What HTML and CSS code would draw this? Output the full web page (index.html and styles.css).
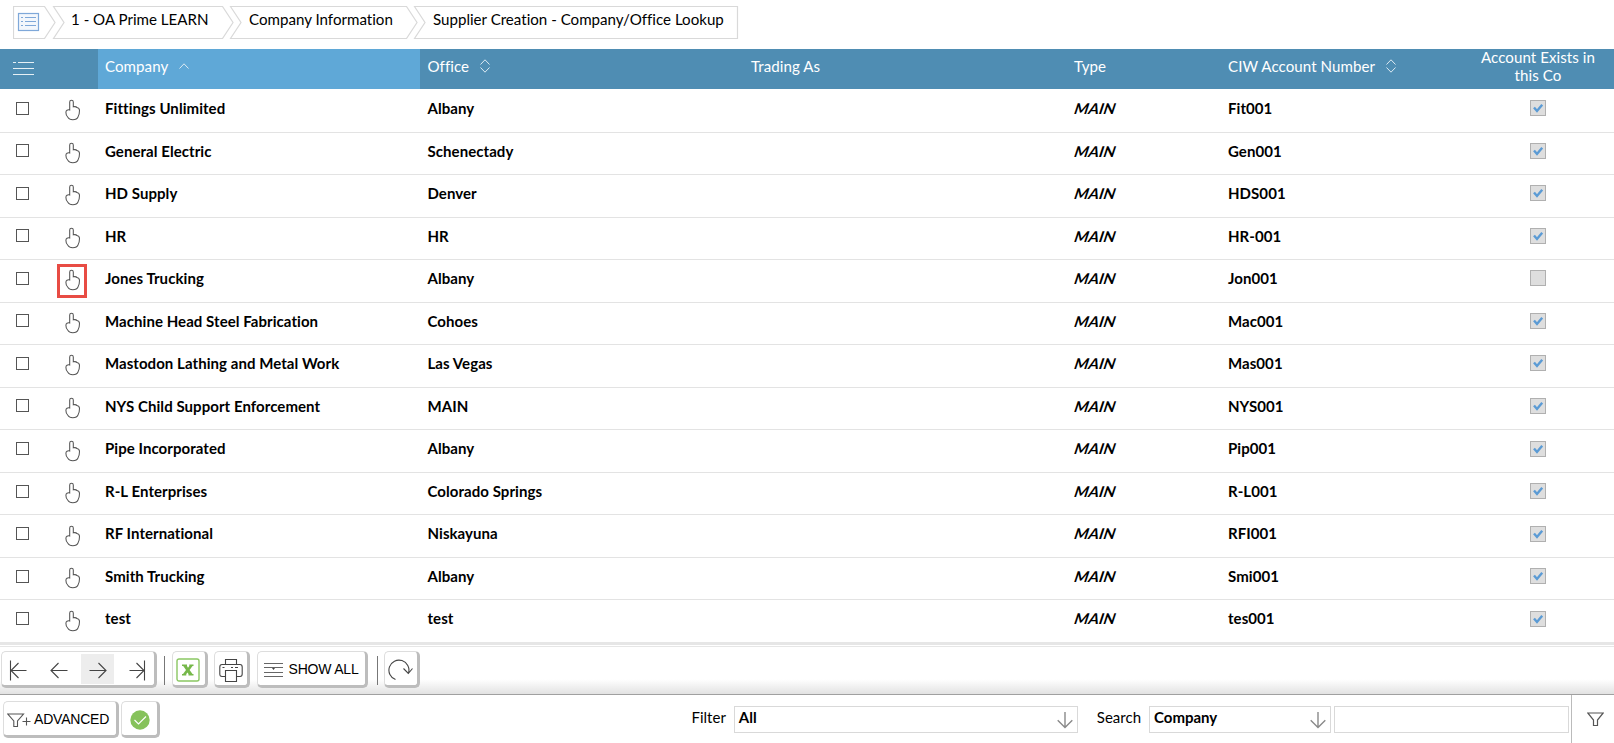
FILE: index.html
```html
<!DOCTYPE html>
<html lang="en">
<head>
<meta charset="utf-8">
<title>Supplier Creation - Company/Office Lookup</title>
<link rel="stylesheet" href="styles.css">
</head>
<body>
<svg class="sprites" width="0" height="0">
  <symbol id="hand" viewBox="0 0 16 22"><path d="M4.700 11V3.100a1.800 1.800 0 0 1 3.600 0V7.800C10 7.400 11.400 7.700 12 8.600C13.800 9 14.500 10 14.500 11.500C14.500 14 14.300 16 13 18C12.300 20 10.500 20.700 7.800 20.700C5 20.700 3.800 20 3 18.500C1.500 17 .8 15 .9 13.200C1 11.300 2.500 10.500 4.700 11z" fill="none" stroke="#555" stroke-width="1.050"/></symbol>
  <symbol id="sort" viewBox="0 0 10 14"><path d="M.5 5.500L5 .8l4.500 4.700M.5 8.500L5 13.200l4.500-4.700" fill="none" stroke="#dceaf2" stroke-width="1"/></symbol>
  <symbol id="tick" viewBox="0 0 16 16"><path d="M4 7.500L7 11L12.200 4.800" fill="none" stroke="#5b9bd5" stroke-width="2.400"/></symbol>
  <symbol id="down" viewBox="0 0 16 18"><path d="M8 1V16.500M.7 9.200L8 16.500L15.300 9.200" fill="none" stroke="#8a8a8a" stroke-width="1.400"/></symbol>
</svg>

<nav class="crumbs">
  <svg class="crumb-shapes" width="726" height="33" viewBox="0 0 726 33" fill="none" stroke="#d9d9d9" stroke-width="1.200">
    <path d="M.5.5H31.500L42 16.500L31.500 32.500H.5z"/>
    <path d="M40.500.5H209.500L220 16.500L209.500 32.500H40.500L51 16.500z"/>
    <path d="M217.500.5H393.500L404 16.500L393.500 32.500H217.500L228 16.500z"/>
    <path d="M401.500.5H724.500V32.500H401.500L412 16.500z"/>
    <g stroke="#7fa8d9"><rect x="5.500" y="7.500" width="20" height="17" fill="#f3f7fc"/><path d="M8 11.500h2M12 11.500h11M8 15.500h2M12 15.500h11M8 19.500h2M12 19.500h11" stroke-width="1"/></g>
  </svg>
  <span class="crumb c1">1 - OA Prime LEARN</span>
  <span class="crumb c2">Company Information</span>
  <span class="crumb c3">Supplier Creation - Company/Office Lookup</span>
</nav>

<main class="grid">
  <div class="row head">
    <span class="sel"><svg width="21" height="16" viewBox="0 0 21 16"><path d="M0 1.500h3M5 1.500h16M0 7.500h21M0 13.500h21" stroke="#e6f0f5" fill="none"/></svg></span>
    <span></span>
    <span class="sorted">Company<svg class="caret" width="10" height="6" viewBox="0 0 10 6"><path d="M.5 5.500L5 .8l4.500 4.700" fill="none" stroke="#dceaf2"/></svg></span>
    <span>Office<svg class="caret" width="10" height="14"><use href="#sort"/></svg></span>
    <span>Trading As</span>
    <span>Type</span>
    <span>CIW Account Number<svg class="caret" width="10" height="14"><use href="#sort"/></svg></span>
    <span class="exists">Account Exists in this Co</span>
  </div>
  <div class="row"><i class="box"></i><span class="pick"><svg width="16" height="22"><use href="#hand"/></svg></span><span>Fittings Unlimited</span><span>Albany</span><span></span><span class="type">MAIN</span><span>Fit001</span><i class="flag"><svg width="16" height="16"><use href="#tick"/></svg></i></div>
  <div class="row"><i class="box"></i><span class="pick"><svg width="16" height="22"><use href="#hand"/></svg></span><span>General Electric</span><span>Schenectady</span><span></span><span class="type">MAIN</span><span>Gen001</span><i class="flag"><svg width="16" height="16"><use href="#tick"/></svg></i></div>
  <div class="row"><i class="box"></i><span class="pick"><svg width="16" height="22"><use href="#hand"/></svg></span><span>HD Supply</span><span>Denver</span><span></span><span class="type">MAIN</span><span>HDS001</span><i class="flag"><svg width="16" height="16"><use href="#tick"/></svg></i></div>
  <div class="row"><i class="box"></i><span class="pick"><svg width="16" height="22"><use href="#hand"/></svg></span><span>HR</span><span>HR</span><span></span><span class="type">MAIN</span><span>HR-001</span><i class="flag"><svg width="16" height="16"><use href="#tick"/></svg></i></div>
  <div class="row"><i class="box"></i><span class="pick marked"><svg width="16" height="22"><use href="#hand"/></svg></span><span>Jones Trucking</span><span>Albany</span><span></span><span class="type">MAIN</span><span>Jon001</span><i class="flag"></i></div>
  <div class="row"><i class="box"></i><span class="pick"><svg width="16" height="22"><use href="#hand"/></svg></span><span>Machine Head Steel Fabrication</span><span>Cohoes</span><span></span><span class="type">MAIN</span><span>Mac001</span><i class="flag"><svg width="16" height="16"><use href="#tick"/></svg></i></div>
  <div class="row"><i class="box"></i><span class="pick"><svg width="16" height="22"><use href="#hand"/></svg></span><span>Mastodon Lathing and Metal Work</span><span>Las Vegas</span><span></span><span class="type">MAIN</span><span>Mas001</span><i class="flag"><svg width="16" height="16"><use href="#tick"/></svg></i></div>
  <div class="row"><i class="box"></i><span class="pick"><svg width="16" height="22"><use href="#hand"/></svg></span><span>NYS Child Support Enforcement</span><span>MAIN</span><span></span><span class="type">MAIN</span><span>NYS001</span><i class="flag"><svg width="16" height="16"><use href="#tick"/></svg></i></div>
  <div class="row"><i class="box"></i><span class="pick"><svg width="16" height="22"><use href="#hand"/></svg></span><span>Pipe Incorporated</span><span>Albany</span><span></span><span class="type">MAIN</span><span>Pip001</span><i class="flag"><svg width="16" height="16"><use href="#tick"/></svg></i></div>
  <div class="row"><i class="box"></i><span class="pick"><svg width="16" height="22"><use href="#hand"/></svg></span><span>R-L Enterprises</span><span>Colorado Springs</span><span></span><span class="type">MAIN</span><span>R-L001</span><i class="flag"><svg width="16" height="16"><use href="#tick"/></svg></i></div>
  <div class="row"><i class="box"></i><span class="pick"><svg width="16" height="22"><use href="#hand"/></svg></span><span>RF International</span><span>Niskayuna</span><span></span><span class="type">MAIN</span><span>RFI001</span><i class="flag"><svg width="16" height="16"><use href="#tick"/></svg></i></div>
  <div class="row"><i class="box"></i><span class="pick"><svg width="16" height="22"><use href="#hand"/></svg></span><span>Smith Trucking</span><span>Albany</span><span></span><span class="type">MAIN</span><span>Smi001</span><i class="flag"><svg width="16" height="16"><use href="#tick"/></svg></i></div>
  <div class="row"><i class="box"></i><span class="pick"><svg width="16" height="22"><use href="#hand"/></svg></span><span>test</span><span>test</span><span></span><span class="type">MAIN</span><span>tes001</span><i class="flag"><svg width="16" height="16"><use href="#tick"/></svg></i></div>
</main>

<section class="tools">
  <div class="btn pager">
    <svg width="152" height="32" viewBox="0 0 152 32" fill="none" stroke="#444" stroke-width="1.100">
      <rect x="79" y="1" width="33" height="30" fill="#ededed" stroke="none"/>
      <path d="M8.500 7.500V27.500M24.500 17.500H9M16.500 10L9 17.500L16.500 25"/>
      <path d="M65.500 17.500H49M56.500 10L49 17.500L56.500 25"/>
      <path d="M87.500 17.500H104.500M96.500 10L104 17.500L96.500 25"/>
      <path d="M127.500 17.500H142M134.500 10L142 17.500L134.500 25M142.500 7.500V27.500"/>
    </svg>
  </div>
  <i class="sep s1"></i>
  <div class="btn excel"><svg width="24" height="24" viewBox="0 0 24 24"><rect x="1" y="1" width="22" height="22" rx="2" fill="none" stroke="#8bc763" stroke-width="1.400"/><path d="M6 6.500h5v1.500l1 1.800l1.300-1.800V6.500H17.500v1.500h-1L13.600 12l2.900 4H17.500v1.500h-5v-1.500l-1-1.600l-1.200 1.600v1.500H6v-1.500h1L10 12l-2.800-4H6z" fill="#76b84a"/></svg></div>
  <div class="btn print"><svg width="24" height="24" viewBox="0 0 24 24" fill="none" stroke="#444" stroke-width="1.100"><path d="M6.500 6V1.500h11V6M6.500 18.500H3Q.8 18.500.8 16V9Q.8 6.500 3 6.500H21Q23.200 6.500 23.200 9V16Q23.200 18.500 21 18.500H17.500M6.500 12.500h11V23.500h-11zM3.500 9.500h2M12 9.500h2M16 9.500h3"/></svg></div>
  <div class="btn show"><svg width="19" height="16" viewBox="0 0 19 16"><path d="M0 1.500h19M0 5.500h19M0 10.500h19M0 14.500h19" stroke="#666" stroke-width="1"/><path d="M8 6h3l-1.500 2z" fill="#444"/></svg>SHOW ALL</div>
  <i class="sep s2"></i>
  <div class="btn reload"><svg width="25" height="22" viewBox="0 0 25 22" fill="none" stroke="#444" stroke-width="1.100"><path d="M7.500 20.500A10 10 0 1 1 20.500 14M15.500 9.500L20.300 14.500L24.500 9.500"/></svg></div>
</section>

<footer class="foot">
  <div class="btn adv"><svg width="24" height="15" viewBox="0 0 24 15" fill="none" stroke="#555" stroke-width="1.100"><path d="M.8 1H16.500L10.500 8V13.500H6.800V8zM15.500 8.500H23.500M19.500 4.500V12.500"/></svg>ADVANCED</div>
  <div class="btn ok"><svg width="20" height="20" viewBox="0 0 20 20"><circle cx="10" cy="10" r="9.700" fill="#86c25b"/><path d="M4.500 10L8.500 14L16 6.500" fill="none" stroke="#fff" stroke-width="1.100"/></svg></div>
  <div class="search">
    <span class="lab">Filter</span>
    <div class="field all">All<svg width="16" height="18"><use href="#down"/></svg></div>
    <span class="lab lab2">Search</span>
    <div class="field by">Company<svg width="16" height="18"><use href="#down"/></svg></div>
    <div class="field term"></div>
  </div>
  <div class="funnel"><svg width="17" height="15" viewBox="0 0 17 15"><path d="M.8 1H16.200L10.500 8V13.500H6.500V8z" fill="none" stroke="#555" stroke-width="1.200"/></svg></div>
</footer>
</body>
</html>
```

FILE: styles.css
```css
* { box-sizing: border-box; }
body { margin: 0; width: 1614px; height: 743px; overflow: hidden; background: #fff; color: #000; font-family: Lato, sans-serif; font-size: 15px; font-variant-ligatures: none; }
svg { display: block; flex: none; }
.sprites { position: absolute; }

.crumbs { position: relative; height: 49px; padding-top: 6px; display: flex; align-items: flex-start; font-size: 15.12px; line-height: 26px; white-space: nowrap; }
.crumb-shapes { position: absolute; left: 13px; top: 6px; }
.crumb { position: relative; }
.c1 { margin-left: 71px; width: 178px; }
.c2 { width: 184px; }

.grid { height: 593px; }
.row { display: grid; grid-template-columns: 57px 41px 322px 323px 323px 154px 226px 168px; height: 42.54px; align-items: center; border-bottom: 1px solid #e3e3e3; font-weight: 700; letter-spacing: .06px; line-height: 20px; white-space: nowrap; }
.row > * { padding-left: 8px; padding-bottom: 5.4px; }
.row > :nth-child(3) { padding-left: 7px; }
.row > :nth-child(4) { padding-left: 7.5px; }
.row .type { transform: skewX(-18deg); }
.row .box { width: 13px; height: 13px; margin: 0 0 5px 16px; padding: 0; border: 1px solid #555; }
.row .pick { padding: 0; margin: 0 0 1px 8px; width: 22px; height: 22px; }
.row .marked { width: 30px; height: 34px; margin: 1px 0 0; border: 3px solid #e84c44; padding: 2px 0 0 5px; }
.row .flag { width: 16px; height: 16px; padding: 0; margin: 0 0 5px 84px; background: #dedede; border: 1px solid #b0b0b0; }
.flag svg { margin: -1px; }

.head { height: 40px; margin-bottom: 1px; background: #4f8db3; color: #fff; font-weight: 400; font-size: 15.1px; border: 0; }
.head > span { display: flex; align-items: center; height: 40px; padding-bottom: 6.5px; }
.head .sorted { background: #5fa8d7; }
.head .sel { padding: 0 0 1px 13px; }
.caret { margin-left: 10.5px; }
.head .exists { display: block; padding: 0 10px; margin: -2px 0 0 16px; white-space: normal; text-align: center; line-height: 18px; }

.tools { height: 53px; border-top: 3px solid #e6e6e6; display: flex; padding: 6px 0 0 1px; border-bottom: 1px solid #a0a0a0; background: linear-gradient(#e6e6e6, #e6e6e6) 0 1px / 100% 1px no-repeat, linear-gradient(#fff 70%, #e2e2e2); }
.btn { height: 37px; border: 1px solid #ddd; border-right: 3px solid #bdbdbd; border-bottom: 3px solid #bdbdbd; border-radius: 5px; background: #fff; display: flex; align-items: center; font: 14px "Liberation Sans", sans-serif; letter-spacing: -.2px; white-space: nowrap; }
.pager { width: 156px; }
.sep { width: 1px; height: 29px; background: #777; }
.s1 { margin: 5px 7px 0; }
.excel { width: 36px; padding-left: 3px; }
.print { width: 36px; margin-left: 6px; padding-left: 4px; }
.excel svg, .print svg { margin-top: 3px; }
.show { width: 111px; margin-left: 7px; padding-left: 5.5px; gap: 6px; }
.show svg { margin-top: 3px; }
.s2 { margin: 5px 6px 0 9px; }
.reload { width: 36px; padding-left: 3px; }
.reload svg { margin-top: 3px; }

.foot { height: 48px; display: flex; padding-left: 3px; }
.foot .btn { margin-top: 6px; }
.adv { width: 116px; padding-left: 3px; gap: 3px; }
.adv svg { margin-top: 3px; }
.ok { width: 39px; margin-left: 2px; padding-left: 8px; }
.ok svg { margin-top: 3px; }
.search { margin-left: auto; display: flex; padding-top: 11px; line-height: 22px; }
.lab { margin-right: 8px; }
.lab2 { margin-left: 19px; }
.field { height: 27px; border: 1px solid #d9d9d9; font-weight: 700; display: flex; justify-content: space-between; padding: 0 4px; line-height: 21px; }
.field svg { margin-top: 4px; }
.all { width: 344px; }
.by { width: 182px; }
.term { width: 235px; margin-left: 3px; }
.funnel { width: 43px; margin-left: 2px; border-left: 1px solid #bbb; padding: 17px 0 0 15px; }
```
